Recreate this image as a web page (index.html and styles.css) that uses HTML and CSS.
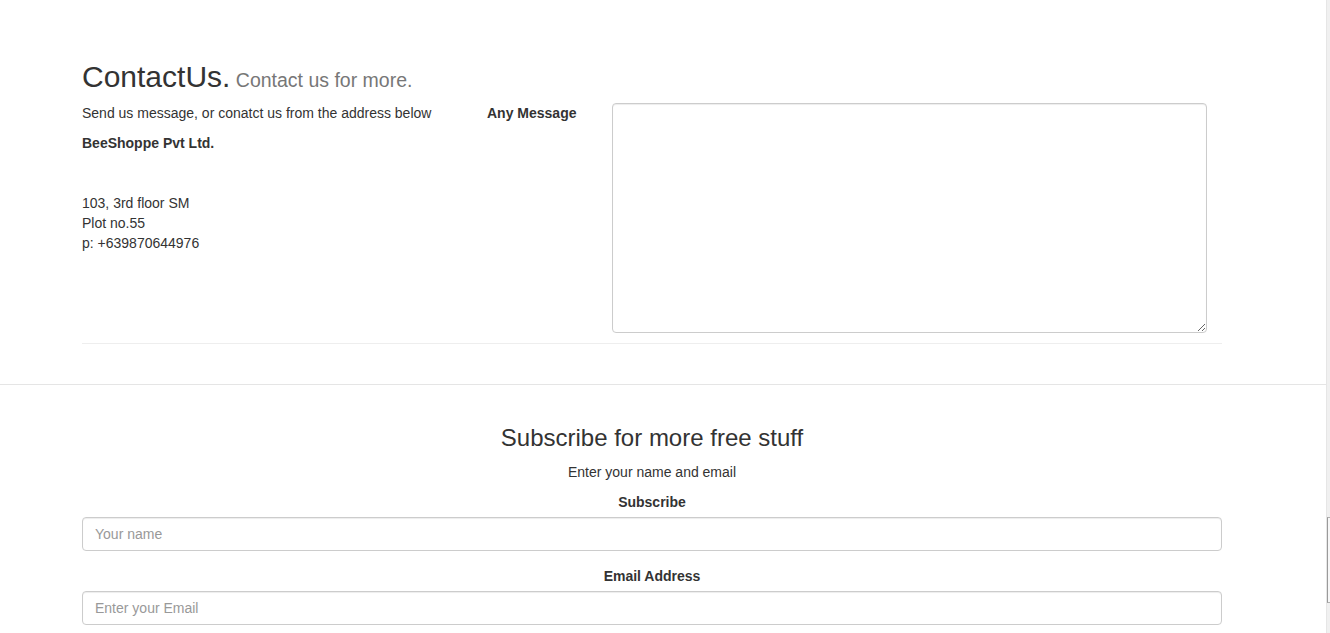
FILE: index.html
```html
<!DOCTYPE html>
<html lang="en">
<head>
<meta charset="utf-8">
<title>Contact Us</title>
<link rel="stylesheet" href="styles.css">
</head>
<body>
<div class="page">
  <main class="main">
    <section class="contact">
      <div class="container">
        <h2 class="title">ContactUs.<small> Contact us for more.</small></h2>
        <div class="contact-row">
          <div class="info">
            <p>Send us message, or conatct us from the address below</p>
            <p class="company">BeeShoppe Pvt Ltd.</p>
            <address class="address">103, 3rd floor SM<br>Plot no.55<br>p: +639870644976</address>
          </div>
          <form class="message-form">
            <label class="control-label" for="msg">Any Message</label>
            <textarea id="msg" class="message"></textarea>
          </form>
        </div>
        <hr class="divider">
      </div>
    </section>
    <section class="subscribe">
      <div class="container">
        <h3 class="sub-title">Subscribe for more free stuff</h3>
        <p class="sub-text">Enter your name and email</p>
        <div class="form-group">
          <label class="field-label" for="name">Subscribe</label>
          <input id="name" class="form-control" type="text" placeholder="Your name">
        </div>
        <div class="form-group">
          <label class="field-label" for="email">Email Address</label>
          <input id="email" class="form-control" type="email" placeholder="Enter your Email">
        </div>
      </div>
    </section>
  </main>
  <div class="rail"><div class="thumb"></div></div>
</div>
</body>
</html>
```

FILE: styles.css
```css
html, body {
  margin: 0;
  padding: 0;
  height: 633px;
  overflow: hidden;
  background: #fff;
}
body {
  font-family: "Liberation Sans", Arial, Helvetica, sans-serif;
  font-size: 14px;
  line-height: 20px;
  color: #333;
}
.page {
  display: flex;
  width: 1330px;
  height: 633px;
}
.main {
  flex: 1;
  min-width: 0;
}
.rail {
  width: 4px;
  background: #f0f0f0;
  border-left: 1px solid #e6e6e6;
  box-sizing: border-box;
  display: flex;
  flex-direction: column;
}
.thumb {
  margin-top: 517px;
  height: 84px;
  border-left: 1px solid #9a9a9a;
  border-top: 1px solid #b0b0b0;
  border-bottom: 1px solid #b0b0b0;
  background: #f7f7f7;
}
.container {
  width: 1140px;
  margin-left: 82px;
}
.contact {
  padding-top: 60px;
  border-bottom: 1px solid #e5e5e5;
}
.title {
  margin: 0 0 9px;
  height: 33px;
  font-size: 30px;
  line-height: 33px;
  font-weight: 500;
  color: #333;
}
.title small {
  font-size: 65%;
  line-height: 1;
  font-weight: 400;
  color: #777;
}
.contact-row {
  display: grid;
  grid-template-columns: 405px 125px 595px;
}
.info {
  padding-top: 1px;
}
.info p {
  margin: 0 0 10px;
}
.company {
  font-weight: 700;
}
.address {
  margin: 40px 0 0;
  font-style: normal;
}
.message-form {
  display: contents;
}
.control-label {
  padding-top: 1px;
  font-weight: 700;
}
.message {
  margin: 1px 0 0;
  width: 595px;
  height: 230px;
  box-sizing: border-box;
  border: 1px solid #ccc;
  border-radius: 4px;
  box-shadow: inset 0 1px 1px rgba(0,0,0,.075);
  padding: 6px 12px;
  font-family: inherit;
  font-size: 14px;
}
.divider {
  margin: 10px 0 40px;
  border: 0;
  border-top: 1px solid #eee;
  height: 0;
}
.subscribe {
  padding-top: 40px;
  text-align: center;
}
.sub-title {
  margin: 0 0 11px;
  font-size: 24px;
  line-height: 26px;
  font-weight: 500;
}
.sub-text {
  margin: 0 0 10px;
}
.form-group {
  margin-bottom: 15px;
  text-align: center;
}
.field-label {
  display: block;
  margin-bottom: 5px;
  font-weight: 700;
}
.form-control {
  display: block;
  width: 100%;
  height: 34px;
  box-sizing: border-box;
  padding: 6px 12px;
  font-family: inherit;
  font-size: 14px;
  line-height: 20px;
  color: #555;
  background: #fff;
  border: 1px solid #ccc;
  border-radius: 4px;
  box-shadow: inset 0 1px 1px rgba(0,0,0,.075);
  margin: 0;
}
.form-control::placeholder {
  color: #999;
}
```
